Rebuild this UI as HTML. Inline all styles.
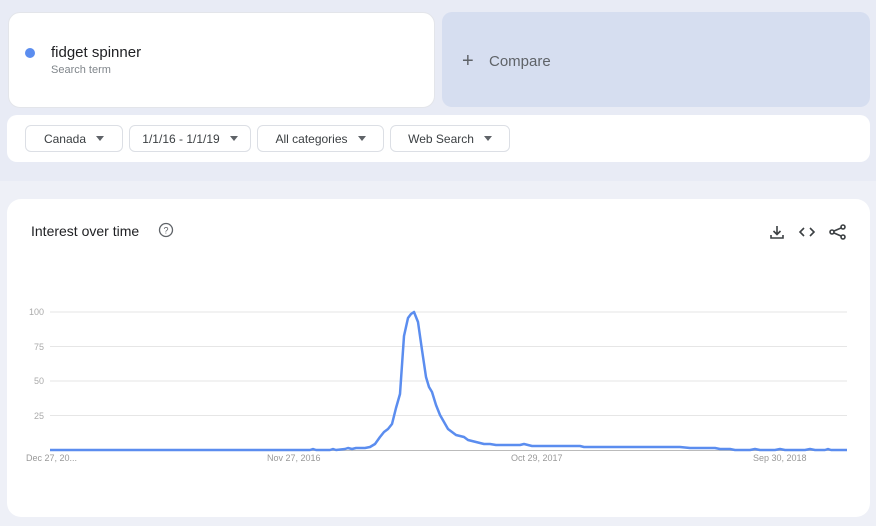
<!DOCTYPE html>
<html><head><meta charset="utf-8"><style>
*{box-sizing:border-box;margin:0;padding:0}
body{width:876px;height:526px;background:#eef0f7;font-family:"Liberation Sans",Arial,sans-serif;position:relative;overflow:hidden}
.top{position:absolute;left:0;top:0;width:876px;height:181px;background:#e8ebf5}
.card{position:absolute;background:#fff;border-radius:12px}
.sel{position:absolute;top:125px;height:27px;border:1px solid #dcdfe5;border-radius:6px;background:#fff;font-size:12px;color:#3c4043;display:flex;align-items:center;justify-content:center}
.sel:after{content:"";border-left:4px solid transparent;border-right:4px solid transparent;border-top:5px solid #5f6368;margin-left:10px}
.yl{position:absolute;left:20px;width:24px;text-align:right;font-size:9px;color:#aaa}
.xl{position:absolute;top:453px;font-size:9px;color:#999}
</style></head><body>
<div class="top"></div>
<div class="card" style="left:8px;top:12px;width:427px;height:96px;border:1px solid #e3e5ea"></div>
<div style="position:absolute;left:25px;top:48px;width:10px;height:10px;border-radius:50%;background:#5b8def"></div>
<div style="position:absolute;left:51px;top:44px;font-size:15px;color:#202124">fidget spinner</div>
<div style="position:absolute;left:51px;top:64px;font-size:11px;color:#80868b">Search term</div>
<div style="position:absolute;left:442px;top:12px;width:428px;height:95px;background:#d6def0;border-radius:10px"></div>
<div style="position:absolute;left:462px;top:50px;font-size:20px;color:#5f6368;font-weight:300">+</div>
<div style="position:absolute;left:489px;top:53px;font-size:15px;color:#5f6368">Compare</div>
<div class="card" style="left:7px;top:115px;width:863px;height:47px;border-radius:10px"></div>
<div class="sel" style="left:25px;width:98px">Canada</div>
<div class="sel" style="left:129px;width:122px">1/1/16 - 1/1/19</div>
<div class="sel" style="left:257px;width:127px">All categories</div>
<div class="sel" style="left:390px;width:120px">Web Search</div>
<div class="card" style="left:7px;top:199px;width:863px;height:318px;border-radius:14px"></div>
<div style="position:absolute;left:31px;top:223px;font-size:14px;color:#202124">Interest over time</div>
<svg style="position:absolute;left:158px;top:222px" width="16" height="16" viewBox="0 0 16 16"><circle cx="8" cy="8" r="6.5" fill="none" stroke="#5f6368" stroke-width="1.3"/><text x="8" y="11.5" font-size="9" text-anchor="middle" fill="#5f6368" font-family="Liberation Sans">?</text></svg>
<svg style="position:absolute;left:768px;top:223px" width="80" height="18" viewBox="0 0 80 18" fill="none" stroke="#3c4043" stroke-width="1.6">
<path d="M9 3v8M5.5 8l3.5 3.5 3.5-3.5M3 12v3h12v-3"/>
<path d="M36 5l-4 4 4 4M42 5l4 4-4 4"/>
<circle cx="75" cy="4" r="2"/><circle cx="64" cy="9" r="2"/><circle cx="75" cy="14" r="2"/><path d="M66 8l7-3M66 10l7 3"/>
</svg>
<svg style="position:absolute;left:0;top:0" width="876" height="526">
<g stroke="#e6e6e6" stroke-width="1"><line x1="50" y1="312" x2="847" y2="312"/><line x1="50" y1="346.5" x2="847" y2="346.5"/><line x1="50" y1="381" x2="847" y2="381"/><line x1="50" y1="415.5" x2="847" y2="415.5"/></g>
<line x1="50" y1="450.5" x2="847" y2="450.5" stroke="#bbb"/>
<polyline fill="none" stroke="#5b8def" stroke-width="2.5" stroke-linejoin="round" points="50,450 310,450 313,449 316,450 330,450 333,449 336,450 345,449 348,448 352,449 356,448 365,448 370,447 375,444 380,437 384,432 388,429 392,424 396,408 400,394 404,336 408,318 411,314 414,312 418,322 422,350 426,377 429,387 432,392 436,405 440,415 444,422 448,429 452,432 456,435 460,436 464,437 468,440 472,441 476,442 480,443 484,444 490,444 496,445 510,445 520,445 524,444 528,445 532,446 540,446 580,446 584,447 600,447 680,447 690,448 715,448 720,449 730,449 735,450 750,450 755,449 760,450 775,450 780,449 785,450 805,450 810,449 815,450 825,450 828,449 831,450 847,450"/>
</svg>
<div class="yl" style="top:307px">100</div>
<div class="yl" style="top:342px">75</div>
<div class="yl" style="top:376px">50</div>
<div class="yl" style="top:411px">25</div>
<div class="xl" style="left:26px">Dec 27, 20...</div>
<div class="xl" style="left:267px">Nov 27, 2016</div>
<div class="xl" style="left:511px">Oct 29, 2017</div>
<div class="xl" style="left:753px">Sep 30, 2018</div>
</body></html>
